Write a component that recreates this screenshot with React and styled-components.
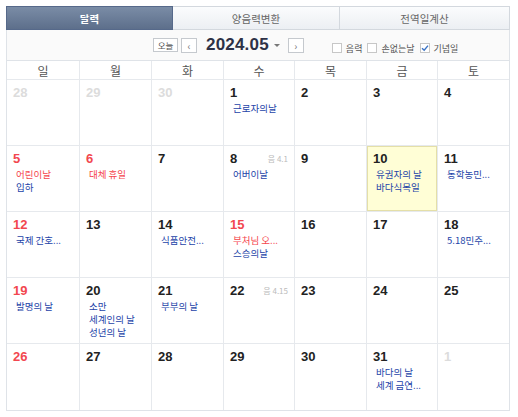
import React from "react";
import styled, { createGlobalStyle } from "styled-components";

const Global = createGlobalStyle`
  html, body { margin: 0; padding: 0; background: #fff; }
  body { font-family: "Noto Sans CJK KR", "Noto Sans", sans-serif; }
`;

const Wrap = styled.div`
  margin: 6px 0 0 6px;
  width: 504px;
`;

const Tabs = styled.div`
  display: grid;
  grid-template-columns: 167px 167px 170px;
  height: 24px;
`;

const Tab = styled.div`
  display: flex;
  align-items: center;
  justify-content: center;
  font-size: 10.5px;
  box-sizing: border-box;
  border: 1px solid ${p => (p.$active ? "#56698a" : "#d3d8de")};
  border-left-width: ${p => (p.$first ? 1 : 0)}px;
  background: ${p =>
    p.$active
      ? "linear-gradient(#7a8ca6, #5d6f8b)"
      : "linear-gradient(#fbfcfd, #eceff3)"};
  color: ${p => (p.$active ? "#fff" : "#666")};
  font-weight: ${p => (p.$active ? 700 : 400)};
`;

const Box = styled.div`
  border: 1px solid #dfe3e8;
  border-top: none;
`;

const Toolbar = styled.div`
  height: 31px;
  display: flex;
  align-items: center;
  background: #fafafa;
  border-bottom: 1px solid #dfe3e8;
  padding-left: 146px;
  box-sizing: border-box;
`;

const SmallBtn = styled.div`
  box-sizing: border-box;
  height: 14px;
  border: 1px solid #c5c9ce;
  background: #fff;
  display: flex;
  align-items: center;
  justify-content: center;
  font-size: 8.5px;
  color: #555;
  padding: 0 3px;
  margin-right: ${p => p.$mr || 0}px;
  width: ${p => p.$w}px;
`;

const Arrow = styled(SmallBtn)`
  height: 15px;
  color: #777;
  font-size: 10px;
`;

const Month = styled.div`
  font-family: "Liberation Sans", Arial, sans-serif;
  font-weight: 700;
  font-size: 17px;
  color: #2d3146;
  margin-left: 9px;
  letter-spacing: 0.2px;
`;

const Caret = styled.span`
  display: inline-block;
  width: 0;
  height: 0;
  border-left: 3px solid transparent;
  border-right: 3px solid transparent;
  border-top: 3px solid #777;
  margin: 0 8px 0 5px;
`;

const Checks = styled.div`
  display: flex;
  align-items: center;
  margin-left: 28px;
  padding-top: 6px;
`;

const Check = styled.label`
  display: flex;
  align-items: center;
  font-size: 9px;
  color: #555;
  margin-right: 5px;
`;

const CBox = styled.span`
  width: 10px;
  height: 10px;
  box-sizing: border-box;
  border: 1px solid #c7c7c7;
  background: #fff;
  margin-right: 4px;
  display: flex;
  align-items: center;
  justify-content: center;
`;

const Grid = styled.div`
  display: grid;
  grid-template-columns: 72px 72px 72px 71px 72px 71px 72px;
`;

const HeadCell = styled.div`
  height: 18px;
  display: flex;
  align-items: center;
  justify-content: center;
  font-size: 12px;
  color: #555;
  border-left: ${p => (p.$first ? "none" : "1px solid #e6e9ed")};
  border-bottom: 1px solid #e6e9ed;
`;

const Cell = styled.div`
  border-left: ${p => (p.$first ? "none" : "1px solid #e6e9ed")};
  border-bottom: ${p => (p.$last ? "none" : "1px solid #e6e9ed")};
  background: ${p => (p.$today ? "#fffed6" : "#fff")};
  box-shadow: ${p => (p.$today ? "inset 0 0 0 1px #e4dfa8" : "none")};
  padding: 6px 4px 0 6px;
  box-sizing: border-box;
  height: 66px;
  position: relative;
  overflow: hidden;
`;

const Num = styled.div`
  font-family: "Liberation Sans", Arial, sans-serif;
  font-weight: 700;
  font-size: 13px;
  line-height: 14px;
  color: ${p => (p.$muted ? "#dcdcdc" : p.$red ? "#f2474f" : "#222")};
  margin-bottom: 2px;
`;

const Lunar = styled.span`
  position: absolute;
  right: 6px;
  top: 7px;
  font-size: 8px;
  color: #bbb;
`;

const Ev = styled.div`
  font-size: 9.5px;
  line-height: 13px;
  color: ${p => (p.$red ? "#f5454d" : "#2343a8")};
  padding-left: 3px;
  white-space: nowrap;
`;

const days = [
  [{ n: 28, m: 1 }, { n: 29, m: 1 }, { n: 30, m: 1 }, { n: 1, e: [["근로자의날"]] }, { n: 2 }, { n: 3 }, { n: 4 }],
  [
    { n: 5, r: 1, e: [["어린이날", 1], ["입하"]] },
    { n: 6, r: 1, e: [["대체 휴일", 1]] },
    { n: 7 },
    { n: 8, l: "음 4.1", e: [["어버이날"]] },
    { n: 9 },
    { n: 10, t: 1, e: [["유권자의 날"], ["바다식목일"]] },
    { n: 11, e: [["동학농민..."]] },
  ],
  [
    { n: 12, r: 1, e: [["국제 간호..."]] },
    { n: 13 },
    { n: 14, e: [["식품안전..."]] },
    { n: 15, r: 1, e: [["부처님 오...", 1], ["스승의날"]] },
    { n: 16 },
    { n: 17 },
    { n: 18, e: [["5.18민주..."]] },
  ],
  [
    { n: 19, r: 1, e: [["발명의 날"]] },
    { n: 20, e: [["소만"], ["세계인의 날"], ["성년의 날"]] },
    { n: 21, e: [["부부의 날"]] },
    { n: 22, l: "음 4.15" },
    { n: 23 },
    { n: 24 },
    { n: 25 },
  ],
  [
    { n: 26, r: 1 },
    { n: 27 },
    { n: 28 },
    { n: 29 },
    { n: 30 },
    { n: 31, e: [["바다의 날"], ["세계 금연..."]] },
    { n: 1, m: 1 },
  ],
];

const Tick = () => (
  <svg width="8" height="8" viewBox="0 0 8 8">
    <path d="M1 4.2 L3.2 6.3 L7 1.6" fill="none" stroke="#3b73c4" strokeWidth="1.4" />
  </svg>
);

export default function App() {
  return (
    <Wrap>
      <Global />
      <Tabs>
        <Tab $active $first>달력</Tab>
        <Tab>양음력변환</Tab>
        <Tab>전역일계산</Tab>
      </Tabs>
      <Box>
        <Toolbar>
          <SmallBtn $w={25} $mr={3}>오늘</SmallBtn>
          <Arrow $w={16}>‹</Arrow>
          <Month>2024.05</Month>
          <Caret />
          <Arrow $w={16}>›</Arrow>
          <Checks>
            <Check><CBox />음력</Check>
            <Check><CBox />손없는날</Check>
            <Check><CBox><Tick /></CBox>기념일</Check>
          </Checks>
        </Toolbar>
        <Grid>
          {["일", "월", "화", "수", "목", "금", "토"].map((d, i) => (
            <HeadCell key={d} $first={i === 0}>{d}</HeadCell>
          ))}
          {days.map((week, wi) =>
            week.map((d, i) => (
              <Cell key={`${wi}-${i}`} $first={i === 0} $last={wi === 4} $today={d.t}>
                <Num $muted={d.m} $red={d.r}>{d.n}</Num>
                {d.l && <Lunar>{d.l}</Lunar>}
                {(d.e || []).map(([txt, red]) => (
                  <Ev key={txt} $red={red}>{txt}</Ev>
                ))}
              </Cell>
            ))
          )}
        </Grid>
      </Box>
    </Wrap>
  );
}
